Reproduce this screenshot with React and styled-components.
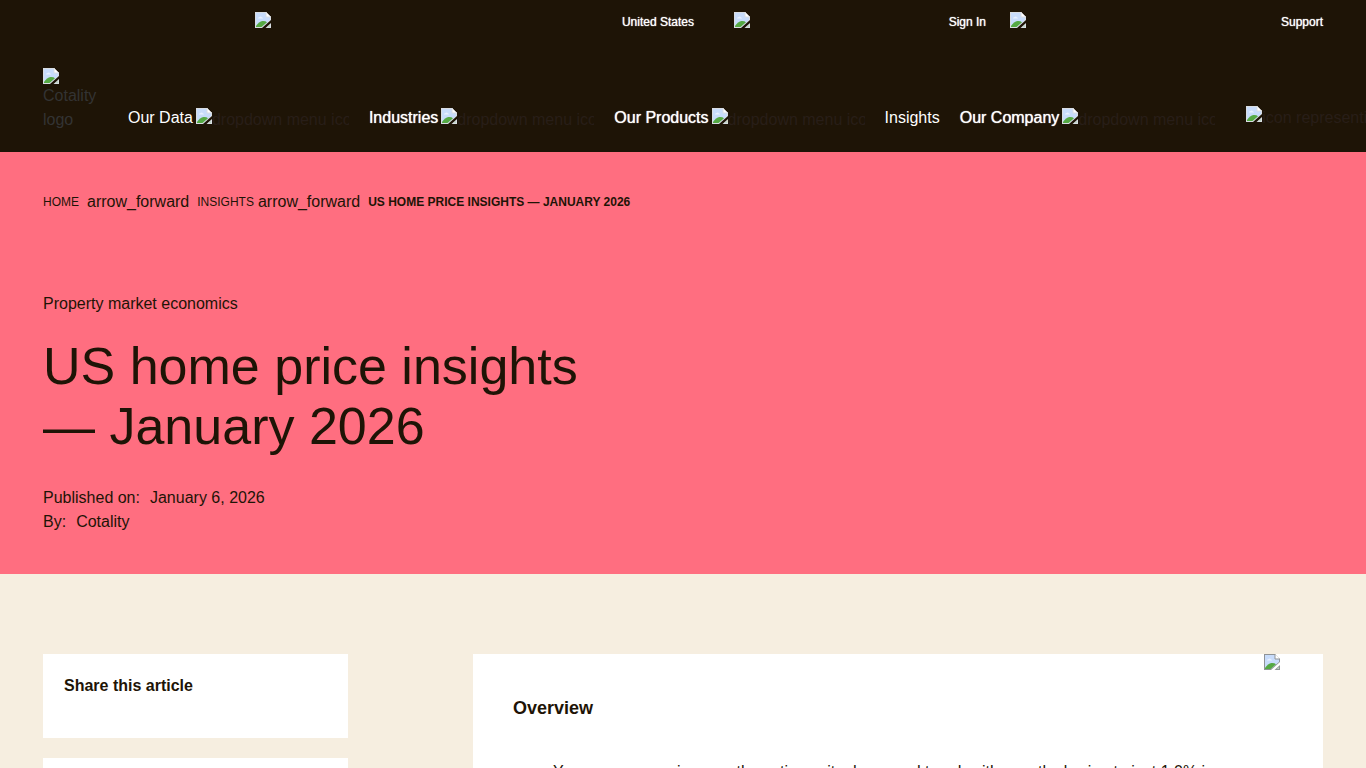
import React from 'react';
import styled, { createGlobalStyle } from 'styled-components';

const GlobalStyle = createGlobalStyle`
  * {
    box-sizing: border-box;
  }

  body {
    margin: 0;
    background-color: #f6eee0;
    color: #1e1406;
    font-family: 'Liberation Sans', Arial, sans-serif;
    font-size: 16px;
    line-height: 24px;
    overflow-x: hidden;
  }

  a {
    color: inherit;
    text-decoration: none;
  }
`;

const Container = styled.div`
  max-width: 1280px;
  margin: 0 auto;
`;

const Header = styled.header`
  height: 152px;
  background-color: #1e1406;
  overflow: hidden;
`;

const TopBar = styled.div`
  display: flex;
  justify-content: flex-end;
  padding-top: 12px;
`;

const TopLink = styled.a`
  display: flex;
  justify-content: space-between;
  width: ${({ $width }) => $width}px;
  margin-left: ${({ $gap }) => $gap || 0}px;
  color: #fff;
  font-size: 12px;
  line-height: 20px;
  text-shadow: 0 0 1px #fff;
`;

const MainBar = styled.div`
  display: flex;
  align-items: flex-start;
  padding-top: 36px;
`;

const Logo = styled.a`
  width: 65px;
  flex-shrink: 0;
  color: #333;
`;

const LogoText = styled.span`
  display: block;
  width: 56px;
`;

const Nav = styled.nav`
  display: flex;
  flex-shrink: 0;
  gap: 20px;
  padding: 38px 0 0 20px;
`;

const NavButton = styled.button`
  display: flex;
  gap: 3px;
  padding: 0;
  border: 0;
  background: none;
  color: #fff;
  font: inherit;
  line-height: 24px;
  white-space: nowrap;
  text-shadow: ${({ $heavy }) => ($heavy ? '0 0 1px #fff' : 'none')};
`;

const NavLink = styled.a`
  color: #fff;
`;

const IconBox = styled.span`
  display: flex;
  width: 153px;
  padding-top: 2px;
  overflow: hidden;
  color: #281e18;
  text-shadow: none;
  white-space: nowrap;
`;

const SearchButton = styled.button`
  display: flex;
  flex-shrink: 0;
  margin-left: 31px;
  padding: 38px 0 0;
  border: 0;
  background: none;
  color: #281e18;
  font: inherit;
  line-height: 24px;
  white-space: nowrap;
`;

const Svg = styled.svg`
  display: block;
  flex-shrink: 0;
  width: 16px;
  height: 16px;
`;

const Hero = styled.section`
  padding: 38px 0 40px;
  background-color: #ff6e80;
`;

const Breadcrumb = styled.nav`
  display: flex;
  font-size: 12px;
`;

const Arrow = styled.span`
  margin: ${({ $first }) => ($first ? '0 8px' : '0 8px 0 4px')};
  font-size: 16px;
`;

const Category = styled.p`
  margin: 78px 0 20px;
`;

const Title = styled.h1`
  max-width: 600px;
  margin: 0 0 30px;
  font-size: 52px;
  font-weight: 400;
  line-height: 60px;
`;

const Meta = styled.div`
  display: flex;
  gap: 10px;
`;

const Content = styled.main`
  display: grid;
  grid-template-columns: 305px minmax(0, 850px);
  justify-content: space-between;
  align-items: start;
  padding-top: 80px;
`;

const Sidebar = styled.aside`
  display: grid;
  gap: 20px;
`;

const Card = styled.div`
  min-height: 84px;
  padding: 20px 21px;
  background-color: #fff;
`;

const CardTitle = styled.h2`
  margin: 0;
  font-size: 16px;
  line-height: 24px;
`;

const Article = styled.article`
  position: relative;
  padding: 40px;
  background-color: #fff;
`;

const Corner = styled.span`
  position: absolute;
  top: 0;
  right: 43px;
`;

const Overview = styled.h2`
  margin: 0 0 38px;
  font-size: 18px;
  line-height: 28px;
`;

const Points = styled.ul`
  margin: 0;
  padding-left: 40px;
  list-style: none;
`;

function ImageIcon({ outline }) {
  const edge = outline ? '#8f9396' : '#d9dde2';

  return (
    <Svg viewBox="0 0 16 16" aria-hidden="true">
      <path d="M0 0H11L16 5V8L7 16H0Z" fill={edge} />
      <path d="M1 1H11V5H15V8L6.5 15H1Z" fill="#c8dcfb" />
      <path d="M3 6.5Q3 5 4.5 5Q6 4 7 5.5Q8 5.5 8 6.5Z" fill="#e8f1ff" />
      <path d="M1 15V14Q4 9.5 7.5 9Q10.5 8.8 12 10.3L6.5 15Z" fill="#55a944" />
      <path d="M11 0L16 5H11Z" fill="#fff" />
      <path d="M11 0V5H16" fill="none" stroke={edge} />
      <path d="M16 11V16H10.5Z" fill={edge} />
      <path d="M15 13V15H12.6Z" fill="#b9d6c0" />
    </Svg>
  );
}

const topLinks = [
  { label: 'United States', width: 439 },
  { label: 'Sign In', width: 252, gap: 40 },
  { label: 'Support', width: 313, gap: 24 },
];

const menus = [
  { label: 'Our Data', menu: true },
  { label: 'Industries', menu: true, heavy: true },
  { label: 'Our Products', menu: true, heavy: true },
  { label: 'Insights' },
  { label: 'Our Company', menu: true, heavy: true },
];

function App() {
  return (
    <>
      <GlobalStyle />
      <Header>
        <Container>
          <TopBar>
            {topLinks.map(({ label, width, gap }) => (
              <TopLink key={label} href="#" $width={width} $gap={gap}>
                <ImageIcon />
                {label}
              </TopLink>
            ))}
          </TopBar>
          <MainBar>
            <Logo href="#">
              <ImageIcon />
              <LogoText>Cotality logo</LogoText>
            </Logo>
            <Nav>
              {menus.map(({ label, menu, heavy }) =>
                menu ? (
                  <NavButton key={label} type="button" $heavy={heavy}>
                    {label}
                    <IconBox>
                      <ImageIcon />
                      dropdown menu icon
                    </IconBox>
                  </NavButton>
                ) : (
                  <NavLink key={label} href="#">
                    {label}
                  </NavLink>
                )
              )}
            </Nav>
            <SearchButton type="button">
              <ImageIcon />
              icon representing search
            </SearchButton>
          </MainBar>
        </Container>
      </Header>

      <Hero>
        <Container>
          <Breadcrumb aria-label="Breadcrumb">
            <a href="#">HOME</a>
            <Arrow $first>arrow_forward</Arrow>
            <a href="#">INSIGHTS</a>
            <Arrow>arrow_forward</Arrow>
            <strong>US HOME PRICE INSIGHTS — JANUARY 2026</strong>
          </Breadcrumb>
          <Category>Property market economics</Category>
          <Title>US home price insights — January 2026</Title>
          <Meta>
            <span>Published on:</span>
            <span>January 6, 2026</span>
          </Meta>
          <Meta>
            <span>By:</span>
            <span>Cotality</span>
          </Meta>
        </Container>
      </Hero>

      <Container>
        <Content>
          <Sidebar>
            <Card>
              <CardTitle>Share this article</CardTitle>
            </Card>
            <Card />
          </Sidebar>
          <Article>
            <Corner>
              <ImageIcon outline />
            </Corner>
            <Overview>Overview</Overview>
            <Points>
              <li>
                Year-over-year price growth continues its downward trend, with growth slowing to just 1.0% in
              </li>
            </Points>
          </Article>
        </Content>
      </Container>
    </>
  );
}

export default App;
